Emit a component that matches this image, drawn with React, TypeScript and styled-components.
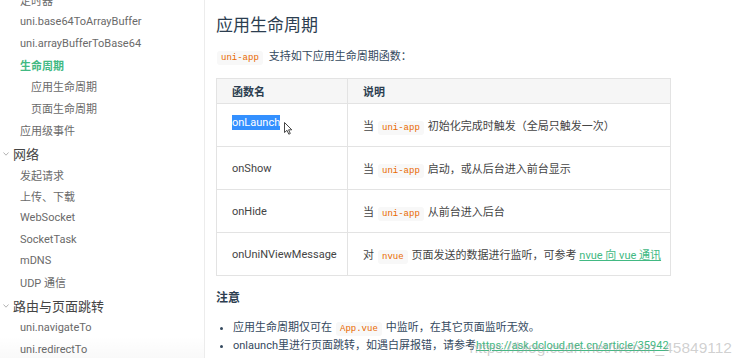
import React, { FC } from "react";
import styled, { createGlobalStyle } from "styled-components";

const GlobalStyle = createGlobalStyle`
  html, body {
    margin: 0;
    padding: 0;
    background: #fff;
  }
  body {
    font-family: Roboto, "Noto Sans CJK SC", sans-serif;
    color: #2c3e50;
  }
`;

type NavItem = { label: string; level: 1 | 2 | 3; active?: boolean };

const navItems: NavItem[] = [
  { label: "定时器", level: 2 },
  { label: "uni.base64ToArrayBuffer", level: 2 },
  { label: "uni.arrayBufferToBase64", level: 2 },
  { label: "生命周期", level: 2, active: true },
  { label: "应用生命周期", level: 3 },
  { label: "页面生命周期", level: 3 },
  { label: "应用级事件", level: 2 },
  { label: "网络", level: 1 },
  { label: "发起请求", level: 2 },
  { label: "上传、下载", level: 2 },
  { label: "WebSocket", level: 2 },
  { label: "SocketTask", level: 2 },
  { label: "mDNS", level: 2 },
  { label: "UDP 通信", level: 2 },
  { label: "路由与页面跳转", level: 1 },
  { label: "uni.navigateTo", level: 2 },
  { label: "uni.redirectTo", level: 2 },
];

const Chevron: FC = () => (
  <ChevronBox>
    <svg width="6" height="4" viewBox="0 0 6 4">
      <polyline points="0.5,0.5 3,3.2 5.5,0.5" fill="none" stroke="#aaa" strokeWidth="0.9" />
    </svg>
  </ChevronBox>
);

const Cursor: FC = () => (
  <CursorMark>
    <svg width="9" height="13" viewBox="0 0 9 13">
      <path
        d="M0.5 0.5 L0.5 10.5 L3 8.3 L4.8 12.2 L6.3 11.5 L4.6 7.8 L7.8 7.8 Z"
        fill="#fff"
        stroke="#333"
        strokeWidth="0.9"
        strokeLinejoin="round"
      />
    </svg>
  </CursorMark>
);

export default function App() {
  return (
    <Page>
      <GlobalStyle />
      <Sidebar>
        <NavList>
          {navItems.map((item, i) => (
            <NavLink key={i} $level={item.level} $active={item.active}>
              {item.level === 1 && <Chevron />}
              {item.label}
            </NavLink>
          ))}
        </NavList>
      </Sidebar>
      <Main>
        <Title>应用生命周期</Title>
        <Intro>
          <Code $first>uni-app</Code>支持如下应用生命周期函数：
        </Intro>
        <Table>
          <colgroup>
            <NameCol />
            <col />
          </colgroup>
          <thead>
            <tr>
              <Th>函数名</Th>
              <Th>说明</Th>
            </tr>
          </thead>
          <tbody>
            <tr>
              <Td>
                <Selected>onLaunch</Selected>
                <Cursor />
              </Td>
              <Td>
                当<Code>uni-app</Code>初始化完成时触发（全局只触发一次）
              </Td>
            </tr>
            <tr>
              <Td>onShow</Td>
              <Td>
                当<Code>uni-app</Code>启动，或从后台进入前台显示
              </Td>
            </tr>
            <tr>
              <Td>onHide</Td>
              <Td>
                当<Code>uni-app</Code>从前台进入后台
              </Td>
            </tr>
            <tr>
              <Td>onUniNViewMessage</Td>
              <Td>
                对<Code>nvue</Code>页面发送的数据进行监听，可参考{" "}
                <Link>nvue 向 vue 通讯</Link>
              </Td>
            </tr>
          </tbody>
        </Table>
        <NoteTitle>注意</NoteTitle>
        <NoteList>
          <li>
            应用生命周期仅可在<Code>App.vue</Code>中监听，在其它页面监听无效。
          </li>
          <li>
            onlaunch里进行页面跳转，如遇白屏报错，请参考
            <Link>https://ask.dcloud.net.cn/article/35942</Link>
          </li>
        </NoteList>
      </Main>
      <Watermark>https://blog.csdn.net/weixin_45849112</Watermark>
    </Page>
  );
}

const Page = styled.div`
  position: relative;
  display: flex;
  width: 742px;
  height: 358px;
  overflow: hidden;
  background: #fff;
`;

const Sidebar = styled.aside`
  position: relative;
  width: 204px;
  flex-shrink: 0;
  border-right: 1px solid #ececec;
  overflow: hidden;

  &::after {
    content: "";
    position: absolute;
    left: 0;
    right: 0;
    bottom: 0;
    height: 22px;
    background: linear-gradient(rgba(0, 0, 0, 0), rgba(0, 0, 0, 0.025));
  }
`;

const NavList = styled.div`
  display: flex;
  flex-direction: column;
  margin-top: -10.5px;
`;

const NavLink = styled.div<{ $level: number; $active?: boolean }>`
  display: flex;
  align-items: center;
  flex-shrink: 0;
  height: 21.55px;
  white-space: nowrap;
  font-size: ${({ $level }) => ($level === 1 ? "13px" : "11px")};
  font-weight: ${({ $active }) => ($active ? 700 : 400)};
  color: ${({ $level, $active }) =>
    $active ? "#42b983" : $level === 1 ? "#444" : "#6a6a6a"};
  padding-left: ${({ $level }) =>
    $level === 1 ? "3px" : $level === 2 ? "20px" : "31px"};
  margin-top: ${({ $level }) => ($level === 1 ? "2px" : "0")};
`;

const ChevronBox = styled.span`
  display: inline-flex;
  width: 10px;
  justify-content: flex-start;
  margin-top: 1px;
`;

const Main = styled.main`
  flex: 1;
  padding-left: 11px;
  min-width: 0;
`;

const Title = styled.h1`
  margin: 13px 0 0;
  font-size: 17px;
  line-height: 24px;
  font-weight: 400;
  color: #2c3e50;
`;

const Intro = styled.p`
  margin: 10px 0 0;
  font-size: 11px;
  line-height: 20px;
  color: #34495e;
`;

const Code = styled.code<{ $first?: boolean }>`
  font-family: "Liberation Mono", monospace;
  font-size: 9px;
  line-height: 1;
  color: #e96900;
  background: #f8f8f8;
  padding: 2px 4px;
  border-radius: 3px;
  margin: ${({ $first }) => ($first ? "0 6px 0 1px" : "0 4px")};
`;

const Table = styled.table`
  margin-top: 11px;
  width: 455px;
  table-layout: fixed;
  border-collapse: collapse;
  font-size: 11px;
`;

const NameCol = styled.col`
  width: 131px;
`;

const Th = styled.th`
  height: 24px;
  padding: 0 15px;
  text-align: left;
  font-weight: 700;
  color: #2c3e50;
  background: #f6f6f6;
  border: 1px solid #e3e3e3;
`;

const Td = styled.td`
  height: 42px;
  padding: 0 15px;
  color: #444;
  border: 1px solid #e3e3e3;
  white-space: nowrap;
`;

const Selected = styled.span`
  background: #3390ff;
  color: #fff;
  padding: 1px 0;
`;

const CursorMark = styled.span`
  display: inline-block;
  margin-left: 4px;
  vertical-align: -9px;
  line-height: 0;
`;

const Link = styled.a`
  color: #42b983;
  text-decoration: underline;
  text-underline-offset: 1px;
`;

const NoteTitle = styled.h4`
  margin: 13px 0 0;
  font-size: 12px;
  line-height: 18px;
  font-weight: 700;
  color: #2c3e50;
`;

const NoteList = styled.ul`
  margin: 12px 0 0;
  padding-left: 17px;
  font-size: 11px;
  line-height: 18px;
  color: #34495e;
  white-space: nowrap;

  li {
    height: 18px;
  }
`;

const Watermark = styled.div`
  position: absolute;
  z-index: 1;
  right: 10px;
  bottom: 1px;
  font-family: "Liberation Sans", sans-serif;
  font-size: 15.5px;
  color: rgba(150, 150, 150, 0.45);
  pointer-events: none;
`;
